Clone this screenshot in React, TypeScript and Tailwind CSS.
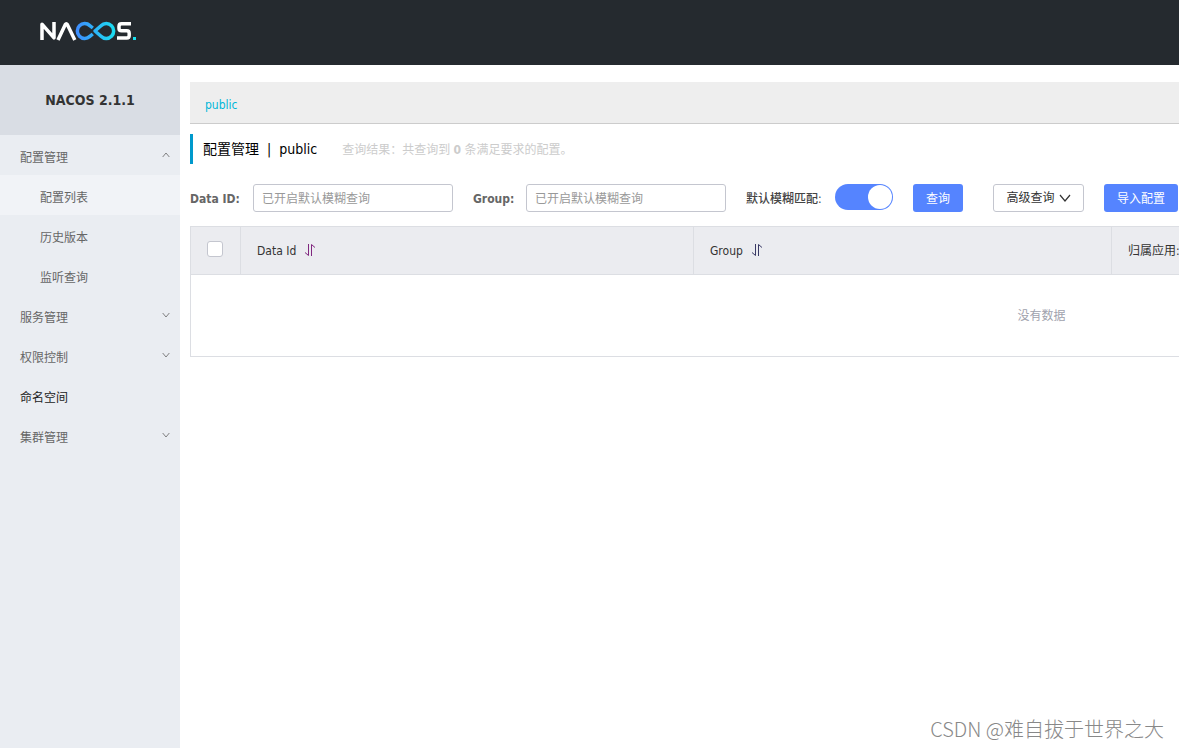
import React from 'react';
import clsx from 'clsx';

interface MenuItem {
  label: string;
  open?: boolean;
  leaf?: boolean;
  children?: string[];
}

const menu: MenuItem[] = [
  { label: '配置管理', open: true, children: ['配置列表', '历史版本', '监听查询'] },
  { label: '服务管理' },
  { label: '权限控制' },
  { label: '命名空间', leaf: true },
  { label: '集群管理' },
];

function Logo() {
  return (
    <svg width="98" height="20" viewBox="0 0 98 20" fill="none" role="img" aria-label="NACOS">
      <defs>
        <linearGradient id="loop" x1="36" y1="0" x2="76" y2="0" gradientUnits="userSpaceOnUse">
          <stop offset="0" stopColor="#3f8cff" />
          <stop offset="1" stopColor="#19e0f0" />
        </linearGradient>
      </defs>
      <g strokeWidth="3.500" strokeLinejoin="round">
        <path d="M2 19V3.200L14 16.800V1" stroke="#fff" />
        <path d="M18 19L25.300 3.500Q26.300 2 27.300 3.500L34.800 19" stroke="#fff" />
        <path d="M52.800 7L49.800 4.600A7.400 7.400 0 1 0 49.800 15.400L52.800 13" stroke="url(#loop)" />
        <path d="M55 10L61 4.800A7.400 7.400 0 1 1 61 15.200Z" stroke="url(#loop)" />
        <path d="M91 2.800H81.500Q79 2.800 79 5.300V7.200Q79 9.800 81.500 9.800H86.800Q89.200 9.800 89.200 12.300V14.500Q89.200 17 86.800 17H77" stroke="#fff" />
      </g>
      <rect x="93" y="16" width="3" height="3" fill="#19e0f0" />
    </svg>
  );
}

function Chevron({ up, className }: { up?: boolean; className?: string }) {
  return (
    <svg className={className} viewBox="0 0 12 8" fill="none" stroke="currentColor" strokeWidth="1.200" aria-hidden="true">
      <path d={up ? 'M1 7L6 1L11 7' : 'M1 1L6 7L11 1'} />
    </svg>
  );
}

function SortIcon({ className }: { className?: string }) {
  return (
    <svg className={className} width="12" height="14" viewBox="0 0 12 14" fill="none" stroke="currentColor" aria-hidden="true">
      <path d="M4.500 1V12.500L1 9.500M7.500 13V1.500L11 4.500" />
    </svg>
  );
}

function Sidebar() {
  return (
    <aside className="w-[180px] shrink-0 bg-[#eaedf2]">
      <h1 className="flex h-[70px] items-center justify-center bg-[#d9dde4] text-sm font-bold text-[#333]">NACOS 2.1.1</h1>
      <nav>
        {menu.map(item => (
          <div key={item.label}>
            <button
              className={clsx(
                'flex h-10 w-full items-center justify-between pt-[6px] pr-[10px] pl-5',
                item.leaf ? 'text-[#222]' : 'text-[#666]'
              )}
            >
              {item.label}
              {!item.leaf && <Chevron up={item.open} className="mb-[6px] h-[6px] w-2 text-[#666]" />}
            </button>
            {item.children?.map((child, i) => (
              <a
                key={child}
                href="#"
                className={clsx('flex h-10 items-center pt-[6px] pl-10 text-[#666]', i === 0 && 'bg-[#f1f3f7]')}
              >
                {child}
              </a>
            ))}
          </div>
        ))}
      </nav>
    </aside>
  );
}

function SearchForm() {
  const input =
    'h-7 w-[200px] rounded-[3px] border border-[#c4c6cf] bg-white px-2 pt-[2px] text-[#333] placeholder:text-[#999] focus:outline-none';
  return (
    <form className="mt-5 flex items-center font-normal whitespace-nowrap *:shrink-0" onSubmit={e => e.preventDefault()}>
      <label htmlFor="dataId" className="w-[63px] pt-[2px] font-bold text-[#666]">Data ID:</label>
      <input id="dataId" className={input} placeholder="已开启默认模糊查询" />
      <label htmlFor="group" className="ml-5 w-[53px] pt-[2px] font-bold text-[#666]">Group:</label>
      <input id="group" className={input} placeholder="已开启默认模糊查询" />
      <label htmlFor="fuzzy" className="ml-5 w-[89px] pt-[2px] font-medium text-[#444]">默认模糊匹配:</label>
      <input
        id="fuzzy"
        type="checkbox"
        role="switch"
        defaultChecked
        className="mb-[2px] flex h-[26px] w-[58px] appearance-none items-center rounded-full bg-[#ccc] px-px before:size-6 before:rounded-full before:bg-white checked:justify-end checked:bg-[#5584ff]"
      />
      <button className="ml-5 h-7 w-[50px] rounded-[3px] bg-[#5584ff] pt-[2px] text-white">查询</button>
      <button className="ml-[30px] flex h-7 w-[91px] items-center justify-center gap-1 rounded-[3px] border border-[#c4c6cf] bg-white text-[#333]">
        高级查询
        <Chevron className="h-2 w-3" />
      </button>
      <button className="ml-5 h-7 w-[74px] rounded-[3px] bg-[#5584ff] pt-[2px] text-white">导入配置</button>
    </form>
  );
}

function ConfigTable() {
  const th = 'border border-[#dcdee3] px-4 text-left font-normal';
  return (
    <table className="mt-[14px] w-[1703px] table-fixed border-collapse border border-[#dcdee3] text-[#333]">
      <thead>
        <tr className="h-12 bg-[#ebecf0]">
          <th className="w-[50px] border border-[#dcdee3] pr-[2px]">
            <input
              type="checkbox"
              aria-label="全选"
              className="mx-auto mb-1 block size-4 appearance-none rounded-[3px] border border-[#c4c6cf] bg-white"
            />
          </th>
          <th className={clsx(th, 'w-[453px]')}>
            <span className="flex items-center gap-2">
              Data Id
              <button aria-label="Data Id 排序"><SortIcon className="mb-[2px] text-[#80277f]" /></button>
            </span>
          </th>
          <th className={clsx(th, 'w-[418px]')}>
            <span className="flex items-center gap-2">
              Group
              <button aria-label="Group 排序"><SortIcon className="mb-[2px] text-[#3a3a66]" /></button>
            </span>
          </th>
          <th className={th}>归属应用:</th>
        </tr>
      </thead>
      <tbody>
        <tr>
          <td colSpan={4} className="h-[82px] text-center text-[#a0a2ad]">没有数据</td>
        </tr>
      </tbody>
    </table>
  );
}

export default function App() {
  return (
    <div className="relative flex min-h-screen flex-col overflow-hidden bg-white font-['DejaVu_Sans_Condensed','Noto_Sans_CJK_SC',sans-serif] text-xs">
      <header className="flex h-[65px] items-center bg-[#252a2f] pb-1 pl-10">
        <Logo />
      </header>
      <div className="flex flex-1">
        <Sidebar />
        <main className="min-w-0 flex-1 overflow-hidden pt-[17px] pl-[10px]">
          <div className="flex h-[42px] items-center border-b border-[#ccc] bg-[#eee] px-[15px] pt-1">
            <a href="#" className="text-[#00b7d9]">public</a>
          </div>
          <div className="mt-[10px] flex h-[30px] items-center border-l-[3px] border-[#09c] pl-[10px]">
            <h2 className="flex gap-2 text-sm text-black">
              <span>配置管理</span>
              <span>|</span>
              <span>public</span>
            </h2>
            <p className="ml-[25px] pt-[2px] text-[#ccc]">
              查询结果：共查询到 <strong>0</strong> 条满足要求的配置。
            </p>
          </div>
          <SearchForm />
          <ConfigTable />
        </main>
      </div>
      <div className="absolute right-[15px] bottom-[5px] font-['Noto_Sans_CJK_SC',sans-serif] text-xl leading-7 font-light text-[#888]">
        CSDN @难自拔于世界之大
      </div>
    </div>
  );
}
